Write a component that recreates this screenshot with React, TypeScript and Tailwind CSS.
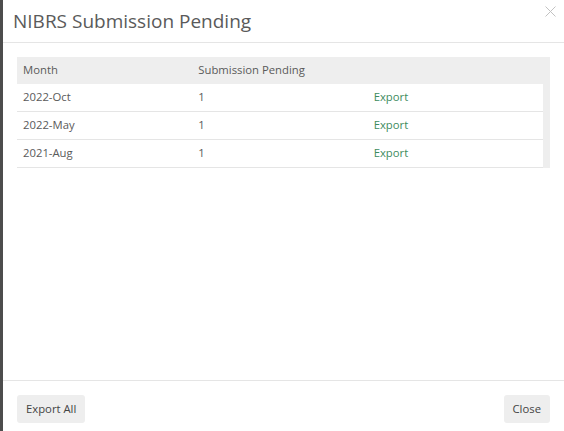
import React from "react";

const rows = [
  { month: "2022-Oct", count: 1 },
  { month: "2022-May", count: 1 },
  { month: "2021-Aug", count: 1 },
];

const font = { fontFamily: "'Open Sans', 'Noto Sans', sans-serif" };

export default function App() {
  return (
    <div className="flex h-[431px] w-[564px] overflow-hidden bg-[#4a4a4a]" style={font}>
      <div className="w-[3px] shrink-0 bg-[#4d4d4d]" />
      <div className="flex flex-1 flex-col bg-white">
        <div className="relative flex h-[43px] shrink-0 items-center border-b border-[#e5e5e5] pl-[10px]">
          <h1 className="text-[19px] font-normal leading-none text-[#5a5a5a]">NIBRS Submission Pending</h1>
          <button className="absolute right-[8px] top-[6px] text-[#c2c2c2]">
            <svg width="11" height="11" viewBox="0 0 11 11" fill="none" stroke="currentColor" strokeWidth="1">
              <path d="M0.5 0.5 L10.5 10.5 M10.5 0.5 L0.5 10.5" />
            </svg>
          </button>
        </div>

        <div className="flex-1 px-[14px] pt-[14px]">
          <div className="bg-[#eeeeee] pr-[7px]">
            <div className="grid h-[27px] grid-cols-3 items-center text-[11.3px] text-[#5a5a5a]">
              <div className="pl-[6px]">Month</div>
              <div className="pl-[6px]">Submission Pending</div>
              <div />
            </div>
            <div className="bg-white">
              {rows.map((r) => (
                <div
                  key={r.month}
                  className="grid h-[28px] grid-cols-3 items-center border-b border-[#e5e5e5] text-[11.3px] text-[#5a5a5a]"
                >
                  <div className="pl-[6px]">{r.month}</div>
                  <div className="pl-[6px]">{r.count}</div>
                  <div className="pl-[6px]">
                    <a className="text-[#3d8b5e]">Export</a>
                  </div>
                </div>
              ))}
            </div>
          </div>
        </div>

        <div className="flex h-[51px] shrink-0 items-start justify-between border-t border-[#e5e5e5] px-[14px] pt-[14px]">
          <button className="h-[28px] rounded-[3px] bg-[#eeeeee] px-[9px] text-[11.3px] text-[#444444]">Export All</button>
          <button className="h-[28px] rounded-[3px] bg-[#eeeeee] px-[9px] text-[11.3px] text-[#444444]">Close</button>
        </div>
      </div>
    </div>
  );
}
